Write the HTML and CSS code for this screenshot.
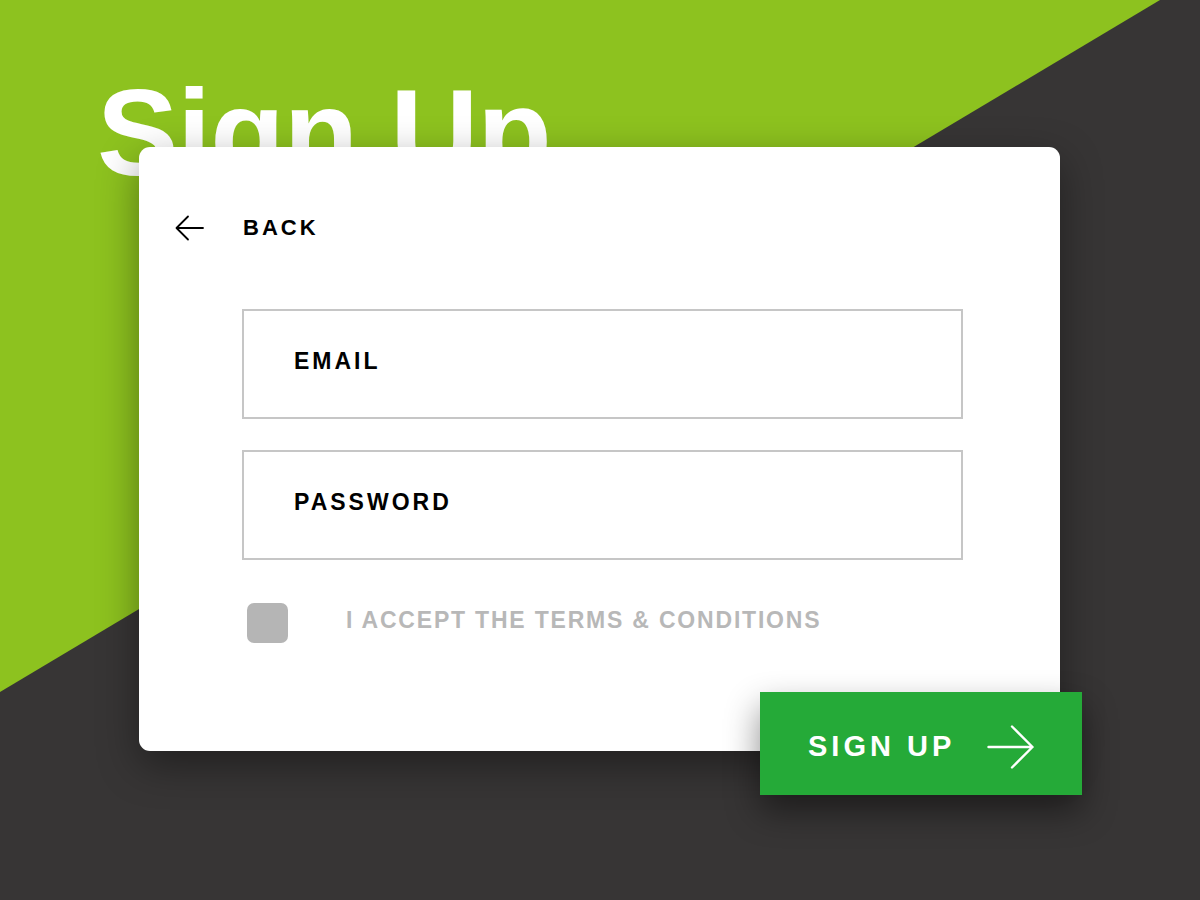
FILE: index.html
```html
<!DOCTYPE html>
<html lang="en">
<head>
<meta charset="utf-8">
<title>Sign Up</title>
<link rel="stylesheet" href="styles.css">
</head>
<body>
<div class="stage">
  <h1 class="title">Sign Up</h1>
  <div class="card">
    <div class="back">
      <svg class="back-icon" width="30" height="26" viewBox="0 0 30 26" aria-hidden="true">
        <path d="M28 13H2M13 1.5L1.5 13L13 24.5" fill="none" stroke="#000" stroke-width="1.8" stroke-linecap="round" stroke-linejoin="round"/>
      </svg>
      <span class="back-label">BACK</span>
    </div>
    <form class="form">
      <div class="field"><span class="field-label">EMAIL</span></div>
      <div class="field"><span class="field-label">PASSWORD</span></div>
      <div class="terms">
        <span class="checkbox"></span>
        <span class="terms-label">I ACCEPT THE TERMS &amp; CONDITIONS</span>
      </div>
    </form>
    <div class="submit">
      <span class="submit-label">SIGN UP</span>
      <svg class="submit-icon" width="48" height="44" viewBox="0 0 48 44" aria-hidden="true">
        <path d="M1.5 22H45.5M25 1.5L45.5 22L25 42.5" fill="none" stroke="#fff" stroke-width="2.4" stroke-linecap="round" stroke-linejoin="round"/>
      </svg>
    </div>
  </div>
</div>
</body>
</html>
```

FILE: styles.css
```css
* { box-sizing: border-box; }

html, body {
  margin: 0;
  padding: 0;
}

body {
  font-family: "Liberation Sans", Arial, Helvetica, sans-serif;
  background: #373535;
}

.stage {
  position: relative;
  width: 1200px;
  height: 900px;
  overflow: hidden;
  background: #373535;
  padding-top: 72px;
}

.stage::before {
  content: "";
  position: absolute;
  left: 0;
  top: 0;
  width: 1200px;
  height: 900px;
  background: #8dc21f;
  clip-path: polygon(0 0, 1160px 0, 0 692px);
}

.title {
  position: relative;
  margin: 0 0 0 97px;
  font-size: 122px;
  line-height: 1;
  height: 75px;
  font-weight: 700;
  color: #fff;
  letter-spacing: -1px;
  white-space: nowrap;
}

.card {
  position: relative;
  z-index: 1;
  margin-left: 139px;
  width: 921px;
  height: 604px;
  background: #fff;
  border-radius: 11px;
  box-shadow: 0 14px 40px rgba(0, 0, 0, 0.4);
  padding-top: 61px;
}

.back {
  display: flex;
  align-items: center;
  height: 40px;
  padding-left: 36px;
}

.back-icon {
  display: block;
  margin-right: 38px;
}

.back-label {
  font-size: 22px;
  font-weight: 700;
  letter-spacing: 3px;
  color: #000;
}

.form {
  margin: 61px 0 0 103px;
  width: 721px;
  display: flex;
  flex-direction: column;
  gap: 31px;
}

.field {
  height: 110px;
  border: 2px solid #c6c6c6;
  display: flex;
  align-items: center;
  padding: 0 0 6px 50px;
}

.field-label {
  font-size: 23px;
  font-weight: 700;
  letter-spacing: 3px;
  color: #000;
}

.terms {
  display: flex;
  align-items: center;
  margin-top: 12px;
  padding-left: 5px;
}

.checkbox {
  width: 41px;
  height: 40px;
  border-radius: 7px;
  background: #b5b5b5;
  margin-right: 58px;
  flex: none;
}

.terms-label {
  font-size: 23px;
  font-weight: 700;
  letter-spacing: 1.8px;
  color: #b8b8b8;
  margin-top: -6px;
}

.submit {
  position: absolute;
  right: -22px;
  bottom: -44px;
  width: 322px;
  height: 103px;
  background: #25aa38;
  box-shadow: 0 16px 34px rgba(0, 0, 0, 0.45);
  display: flex;
  align-items: center;
  padding: 6px 0 0 48px;
}

.submit-label {
  font-size: 29px;
  font-weight: 700;
  letter-spacing: 4px;
  color: #fff;
  margin-right: 32px;
}

.submit-icon {
  display: block;
}
```
